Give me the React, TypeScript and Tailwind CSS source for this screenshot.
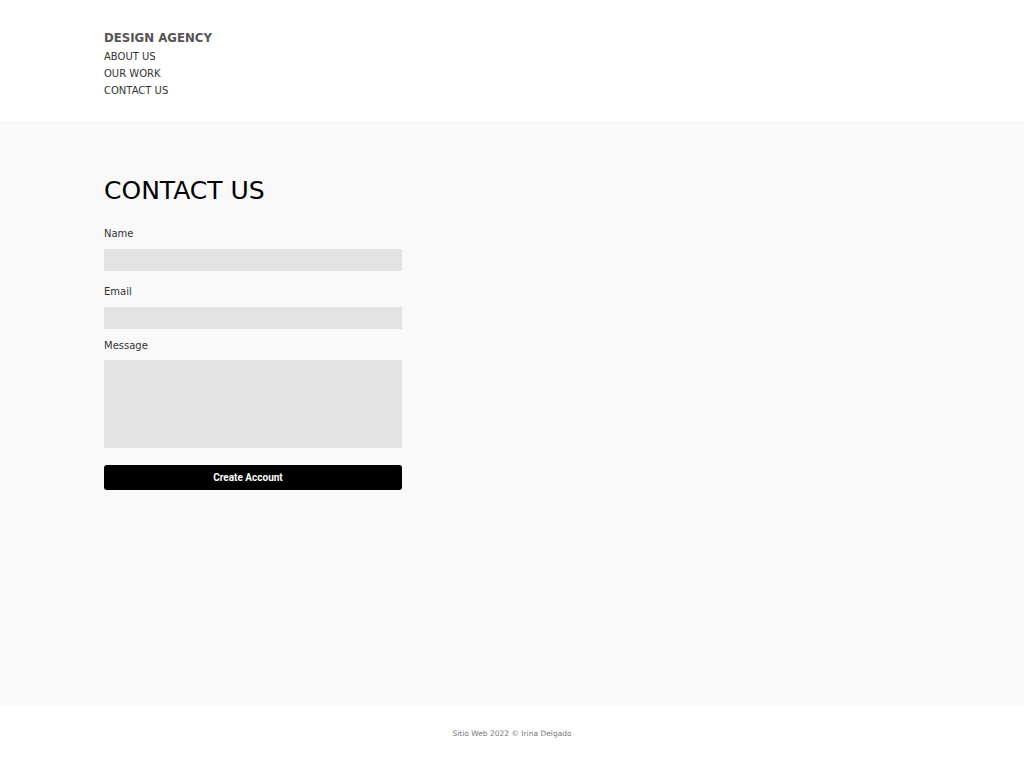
export default function App() {
  return (
    <div className="flex min-h-[761px] flex-col bg-white font-['DejaVu_Sans',sans-serif]">
      <header className="h-[121px] px-[104px] pt-[31px]">
        <div className="text-[11.75px] font-semibold leading-[15px] text-[#555]">DESIGN AGENCY</div>
        <nav className="mt-[2px] flex flex-col text-[10px] leading-[17px] text-[#333]">
          <a>ABOUT US</a>
          <a>OUR WORK</a>
          <a>CONTACT US</a>
        </nav>
      </header>

      <main className="h-[585px] bg-[#f9f9f9] px-[104px] pt-[55px]">
        <h1 className="text-[25px] leading-[30px] text-black">CONTACT US</h1>
        <form className="mt-[21px] flex w-[298px] flex-col">
          <label className="text-[10px] leading-[14px] text-[#333]">Name</label>
          <input className="mt-[8px] h-[22px] bg-[#e3e3e3] outline-none" />
          <label className="mt-[14px] text-[10px] leading-[14px] text-[#333]">Email</label>
          <input className="mt-[8px] h-[22px] bg-[#e3e3e3] outline-none" />
          <label className="mt-[10px] text-[10px] leading-[14px] text-[#333]">Message</label>
          <textarea className="mt-[7px] h-[88px] resize-none bg-[#e3e3e3] outline-none" />
          <button
            type="button"
            className="mt-[17px] h-[25px] rounded-[3px] bg-black pr-[10px] font-['Roboto',sans-serif] text-[10px] font-bold text-white"
          >
            Create Account
          </button>
        </form>
      </main>

      <footer className="flex h-[55px] items-center justify-center">
        <span className="text-[7.5px] text-[#777]">Sitio Web 2022 © Irina Delgado</span>
      </footer>
    </div>
  );
}
